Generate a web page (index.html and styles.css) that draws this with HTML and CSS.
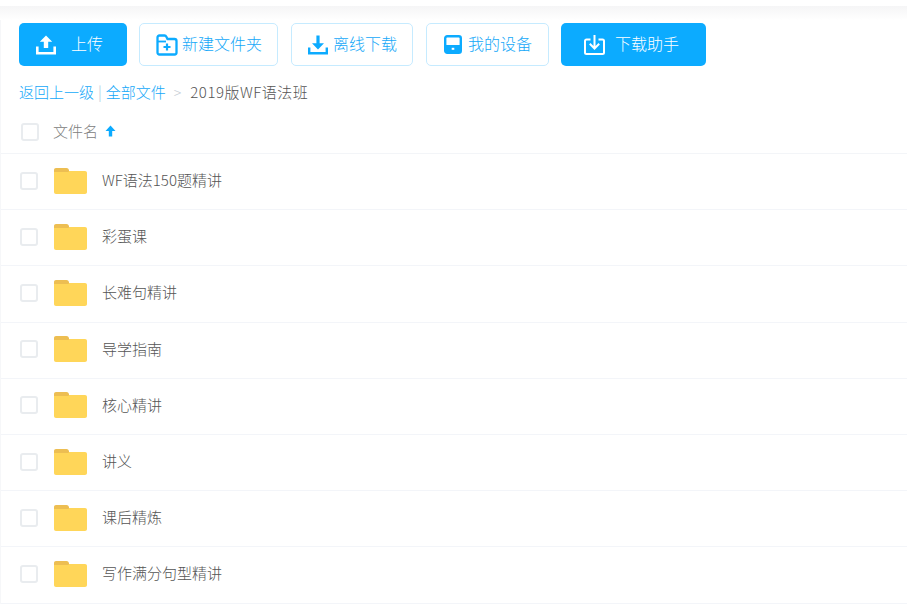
FILE: index.html
```html
<!DOCTYPE html>
<html lang="zh">
<head>
<meta charset="utf-8">
<title>文件列表</title>
<link rel="stylesheet" href="styles.css">
</head>
<body>
<div class="topband"></div>
<main class="panel">
  <div class="toolbar">
    <a class="btn primary w-upload">
      <svg class="ico i-up" viewBox="0 0 20 20"><path d="M10 .5 3.800 6.800H7.800V13h4.400V6.800h4z" fill="#fff"/><path d="M1.300 11.500v6.700h17.400v-6.700" fill="none" stroke="#fff" stroke-width="2.600"/></svg>
      <span>上传</span>
    </a>
    <a class="btn outline w-new">
      <svg class="ico i-new" viewBox="0 0 22 22"><path d="M1.500 10V3.500C1.500 2.300 2.300 1.500 3.500 1.500H8.500C9.500 1.500 10 2 10.500 3L11.500 5H18.500C19.700 5 20.500 5.800 20.500 7V18.500C20.500 19.700 19.700 20.500 18.500 20.500H3.500C2.300 20.500 1.500 19.700 1.500 18.500Z" fill="none" stroke="#0cabff" stroke-width="2.300"/><path d="M2 7.500h8" stroke="#0cabff" stroke-width="1.800"/><path d="M11 9.500v7M7.500 13h7" stroke="#0cabff" stroke-width="2.200"/></svg>
      <span>新建文件夹</span>
    </a>
    <a class="btn outline w-off">
      <svg class="ico i-off" viewBox="0 0 20 20"><path d="M8.400.5h3.200v7.800H16l-6 6.200-6-6.200h4.400z" fill="#0cabff"/><path d="M1.200 12.500v5.800h17.600v-5.800" fill="none" stroke="#0cabff" stroke-width="2.400"/></svg>
      <span>离线下载</span>
    </a>
    <a class="btn outline w-dev">
      <svg class="ico i-dev" viewBox="0 0 18 19"><rect x="1.200" y="1.200" width="15.600" height="16.600" rx="2" fill="none" stroke="#0cabff" stroke-width="2.400"/><path d="M1 10h16V17H1z" fill="#0cabff"/><rect x="7.700" y="12.800" width="2.600" height="2" fill="#fff"/></svg>
      <span>我的设备</span>
    </a>
    <a class="btn primary w-help">
      <svg class="ico i-help" viewBox="0 0 21 20"><path d="M6.500 4.500H2.500C1.600 4.500 1 5.100 1 6V17.500C1 18.400 1.600 19 2.500 19H18.500C19.400 19 20 18.400 20 17.500V6C20 5.100 19.400 4.500 18.500 4.500H14.500" fill="none" stroke="#fff" stroke-width="2"/><path d="M10.500 0v13M5.800 8.800l4.700 4.700 4.700-4.700" fill="none" stroke="#fff" stroke-width="2"/></svg>
      <span>下载助手</span>
    </a>
  </div>

  <nav class="crumbs">
    <a>返回上一级</a><i class="pipe">|</i><a>全部文件</a><i class="gt">&gt;</i><span class="current">2019版WF语法班</span>
  </nav>

  <div class="head">
    <span class="check head-check"></span>
    <span class="head-name">文件名</span>
    <svg class="sort" viewBox="0 0 11 12"><path d="M5.500.5 10.500 6H7.200v5.500H3.800V6H.5z" fill="#0cabff"/></svg>
  </div>

  <ul class="list">
    <li class="row"><span class="check"></span><svg class="folder" viewBox="0 0 33 26"><use href="#f"/></svg><span class="name">WF语法150题精讲</span></li>
    <li class="row"><span class="check"></span><svg class="folder" viewBox="0 0 33 26"><use href="#f"/></svg><span class="name">彩蛋课</span></li>
    <li class="row"><span class="check"></span><svg class="folder" viewBox="0 0 33 26"><use href="#f"/></svg><span class="name">长难句精讲</span></li>
    <li class="row"><span class="check"></span><svg class="folder" viewBox="0 0 33 26"><use href="#f"/></svg><span class="name">导学指南</span></li>
    <li class="row"><span class="check"></span><svg class="folder" viewBox="0 0 33 26"><use href="#f"/></svg><span class="name">核心精讲</span></li>
    <li class="row"><span class="check"></span><svg class="folder" viewBox="0 0 33 26"><use href="#f"/></svg><span class="name">讲义</span></li>
    <li class="row"><span class="check"></span><svg class="folder" viewBox="0 0 33 26"><use href="#f"/></svg><span class="name">课后精炼</span></li>
    <li class="row"><span class="check"></span><svg class="folder" viewBox="0 0 33 26"><use href="#f"/></svg><span class="name">写作满分句型精讲</span></li>
  </ul>
</main>
<svg class="defs" aria-hidden="true"><defs><g id="f"><path d="M0 2C0 .8.800 0 2 0H12.500C13.800 0 14.500.8 15 2V6H0Z" fill="#edbe52"/><path d="M0 4H14.500L15 3H31C32.200 3 33 3.800 33 5V24C33 25.200 32.200 26 31 26H2C.8 26 0 25.200 0 24Z" fill="#ffd659"/></g></defs></svg>
</body>
</html>
```
FILE: styles.css
```css
* { box-sizing: border-box; }
html, body { margin: 0; padding: 0; }
body {
  width: 907px;
  height: 604px;
  overflow: hidden;
  background: #fff;
  font-family: "Noto Sans CJK SC", "Liberation Sans", sans-serif;
  font-size: 15px;
  font-weight: 300;
  color: #555;
}
.topband {
  height: 14px;
  margin-top: 6px;
  background: linear-gradient(#f5f5f6, #fff);
}
.panel { border-left: 1px solid #f6f7f9; padding-top: 3px; }
.toolbar { display: flex; padding-left: 18px; }
.btn {
  display: flex;
  align-items: center;
  height: 43px;
  border-radius: 5px;
  font-size: 16px;
  line-height: 1;
}
.btn span { position: relative; top: -2px; }
.primary { background: #0cabff; color: #fff; }
.outline { background: #fff; border: 1px solid #c6ebff; color: #14a8f8; }
.w-upload { width: 108px; margin-right: 12px; padding-left: 17px; }
.w-new { width: 139px; margin-right: 13px; padding-left: 16px; }
.w-off { width: 122px; margin-right: 13px; padding-left: 16px; }
.w-dev { width: 123px; margin-right: 12px; padding-left: 17px; }
.w-help { width: 145px; padding-left: 23px; }
.ico { flex: none; }
.i-up { width: 20px; height: 20px; margin-right: 15px; }
.i-new { width: 22px; height: 22px; margin-right: 4px; }
.i-off { width: 20px; height: 20px; margin-right: 5px; }
.i-dev { width: 18px; height: 19px; margin-right: 6px; }
.i-help { width: 21px; height: 20px; margin-right: 10px; }
.crumbs {
  display: flex;
  align-items: center;
  height: 20px;
  margin-top: 16px;
  padding-left: 18px;
  line-height: 20px;
  white-space: nowrap;
}
.crumbs a { color: #14a8f8; }
.pipe { font-style: normal; color: #a8c8dc; margin: 0 4px; }
.gt { font-style: normal; color: #c4ccd4; margin: 0 9px 0 8px; font-size: 14px; }
.current { color: #555; letter-spacing: .5px; }
.head {
  display: flex;
  align-items: center;
  height: 43px;
  margin-top: 9px;
  padding: 0 0 4px 20px;
  border-bottom: 1px solid #f3f5f8;
}
.check {
  width: 18px;
  height: 18px;
  flex: none;
  border: 2px solid #e9ecef;
  border-radius: 3px;
  background: #fff;
}
.head-check { position: relative; top: 2px; }
.head-name { margin-left: 14px; color: #808080; }
.sort { width: 11px; height: 12px; margin: 1px 0 0 7px; }
.list { list-style: none; margin: 0; padding: 0; }
.row {
  display: flex;
  align-items: center;
  height: 56.2px;
  padding: 0 0 2px 19px;
  border-bottom: 1px solid #f3f5f9;
}
.folder { width: 33px; height: 26px; margin-left: 16px; flex: none; }
.name { margin-left: 15px; color: #555; white-space: nowrap; position: relative; top: -1px; }
.defs { position: absolute; width: 0; height: 0; }
```
